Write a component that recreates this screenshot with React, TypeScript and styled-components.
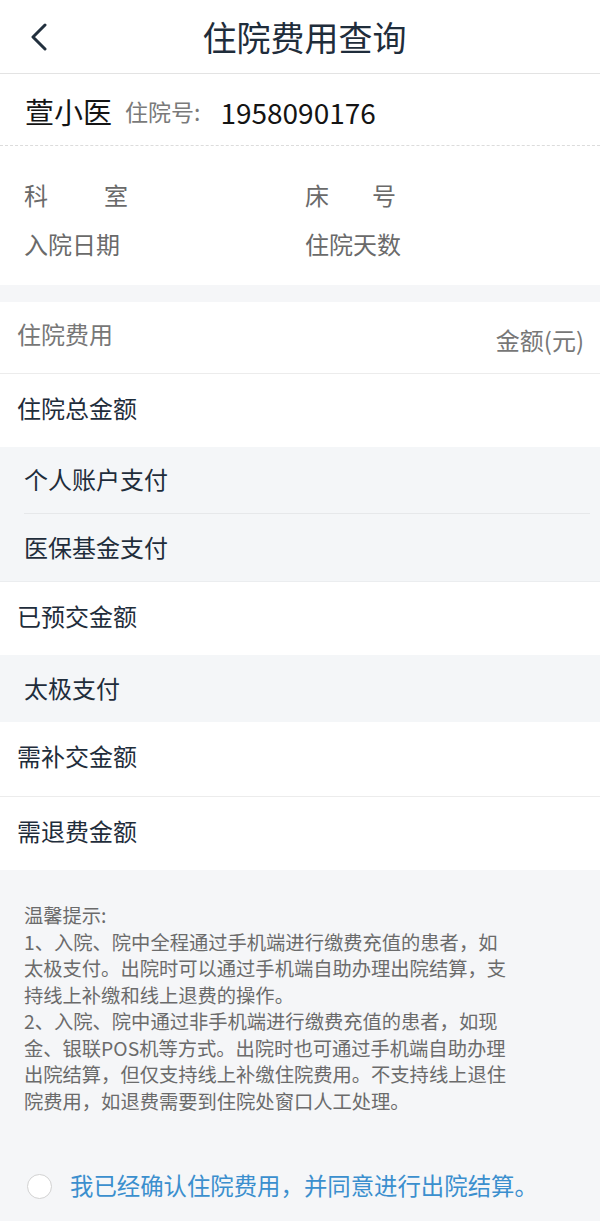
import React from "react";
import styled, { createGlobalStyle } from "styled-components";

const GlobalStyle = createGlobalStyle`
  html, body {
    margin: 0;
    padding: 0;
    background: #f5f6f8;
  }
  body {
    font-family: "Noto Sans CJK SC", "Noto Sans", sans-serif;
    -webkit-font-smoothing: antialiased;
  }
  * { box-sizing: border-box; }
`;

const Page = styled.div`
  width: 600px;
  min-height: 1221px;
  background: #f5f6f8;
  display: flex;
  flex-direction: column;
`;

const Header = styled.header`
  height: 74px;
  background: #fff;
  border-bottom: 1px solid #e3e3e3;
  display: grid;
  grid-template-columns: 80px 1fr 80px;
  align-items: center;
`;

const BackButton = styled.button`
  border: 0;
  background: transparent;
  padding: 0 0 0 30px;
  height: 100%;
  display: flex;
  align-items: center;
  cursor: pointer;
`;

const Title = styled.h1`
  margin: 0;
  padding-left: 9px;
  text-align: center;
  font-size: 34px;
  font-weight: 400;
  color: #1f2d3b;
  line-height: 1;
`;

const PatientRow = styled.div`
  height: 72px;
  background: #fff;
  border-bottom: 1px dashed #dcdcdc;
  display: flex;
  align-items: center;
  padding: 4px 0 0 25px;
`;

const Name = styled.span`
  font-size: 29px;
  color: #141414;
  line-height: 1;
`;

const NoLabel = styled.span`
  font-size: 23px;
  color: #7a7a7a;
  margin-left: 13px;
  line-height: 1;
`;

const NoValue = styled.span`
  font-size: 28px;
  color: #141414;
  margin-left: 20px;
  line-height: 1;
`;

const InfoGrid = styled.div`
  background: #fff;
  display: grid;
  grid-template-columns: 281px 1fr;
  grid-auto-rows: 49px;
  padding: 24px 0 17px 24px;
`;

const InfoLabel = styled.div<{ $w?: number }>`
  display: flex;
  align-items: center;
  justify-content: space-between;
  width: ${(p) => (p.$w ? `${p.$w}px` : "auto")};
  font-size: 24px;
  color: #6a6a6a;
  line-height: 1;
`;

const FeeTable = styled.section`
  margin-top: 17px;
  display: flex;
  flex-direction: column;
`;

const FeeHead = styled.div`
  height: 72px;
  background: #fff;
  border-bottom: 1px solid #ececec;
  display: flex;
  align-items: center;
  justify-content: space-between;
  padding: 0 16px 0 17px;
`;

const HeadText = styled.span<{ $shift: number }>`
  font-size: 24px;
  color: #777;
  line-height: 1;
  margin-top: ${(p) => p.$shift}px;
`;

const Row = styled.div<{ $h: number; $gray?: boolean; $indent?: number; $line?: boolean; $lift?: number }>`
  height: ${(p) => p.$h}px;
  background: ${(p) => (p.$gray ? "#f4f6f8" : "#fff")};
  border-bottom: ${(p) => (p.$line ? "1px solid #ececec" : "0")};
  display: flex;
  align-items: center;
  padding-left: ${(p) => p.$indent ?? 17}px;
  padding-bottom: ${(p) => p.$lift ?? 0}px;
  font-size: 24px;
  color: #1f2d3b;
  line-height: 1;
`;

const SubGroup = styled.div`
  background: #f4f6f8;
  border-bottom: 1px solid #ebedef;
  display: flex;
  flex-direction: column;
  padding: 0 10px 0 24px;
`;

const SubRow = styled.div<{ $divider?: boolean }>`
  height: 67px;
  display: flex;
  align-items: center;
  padding-bottom: 2px;
  border-bottom: ${(p) => (p.$divider ? "1px solid #e6e8ea" : "0")};
  font-size: 24px;
  color: #1f2d3b;
  line-height: 1;
`;

const Notice = styled.div`
  padding: 32px 0 0 24px;
  font-size: 19.3px;
  line-height: 26.5px;
  color: #6b6b6b;
`;

const NoticePara = styled.p`
  margin: 0;
  max-width: 25.3em;
`;

const Agree = styled.label`
  margin-top: 48px;
  height: 48px;
  display: flex;
  align-items: center;
  padding-left: 27px;
  gap: 18px;
  cursor: pointer;
`;

const Circle = styled.span`
  width: 25px;
  height: 25px;
  border-radius: 50%;
  border: 1px solid #d2d2d2;
  background: #fff;
  flex: none;
`;

const AgreeText = styled.span`
  font-size: 23.4px;
  color: #3b8fce;
  line-height: 1;
`;

const Spacer = styled.div`
  flex: 1;
`;

export default function App() {
  return (
    <>
      <GlobalStyle />
      <Page>
        <Header>
          <BackButton aria-label="返回">
            <svg width="18" height="28" viewBox="0 0 18 28" fill="none">
              <path d="M15 2 L3 14 L15 26" stroke="#22303e" strokeWidth="3" strokeLinecap="round" strokeLinejoin="round" />
            </svg>
          </BackButton>
          <Title>住院费用查询</Title>
          <div />
        </Header>

        <PatientRow>
          <Name>萱小医</Name>
          <NoLabel>住院号:</NoLabel>
          <NoValue>1958090176</NoValue>
        </PatientRow>

        <InfoGrid>
          <InfoLabel $w={104}>
            <span>科</span>
            <span>室</span>
          </InfoLabel>
          <InfoLabel $w={91}>
            <span>床</span>
            <span>号</span>
          </InfoLabel>
          <InfoLabel>入院日期</InfoLabel>
          <InfoLabel>住院天数</InfoLabel>
        </InfoGrid>

        <FeeTable>
          <FeeHead>
            <HeadText $shift={-8}>住院费用</HeadText>
            <HeadText $shift={4}>金额(元)</HeadText>
          </FeeHead>
          <Row $h={73} $lift={6}>住院总金额</Row>
          <SubGroup>
            <SubRow $divider>个人账户支付</SubRow>
            <SubRow>医保基金支付</SubRow>
          </SubGroup>
          <Row $h={73} $lift={6}>已预交金额</Row>
          <Row $h={67} $gray $indent={24} $lift={2}>
            太极支付
          </Row>
          <Row $h={75} $line $lift={6}>
            需补交金额
          </Row>
          <Row $h={73} $lift={6}>需退费金额</Row>
        </FeeTable>

        <Notice>
          <NoticePara>温馨提示:</NoticePara>
          <NoticePara>
            1、入院、院中全程通过手机端进行缴费充值的患者，如太极支付。出院时可以通过手机端自助办理出院结算，支持线上补缴和线上退费的操作。
          </NoticePara>
          <NoticePara>
            2、入院、院中通过非手机端进行缴费充值的患者，如现金、银联POS机等方式。出院时也可通过手机端自助办理出院结算，但仅支持线上补缴住院费用。不支持线上退住院费用，如退费需要到住院处窗口人工处理。
          </NoticePara>
        </Notice>

        <Agree>
          <Circle />
          <AgreeText>我已经确认住院费用，并同意进行出院结算。</AgreeText>
        </Agree>
        <Spacer />
      </Page>
    </>
  );
}
